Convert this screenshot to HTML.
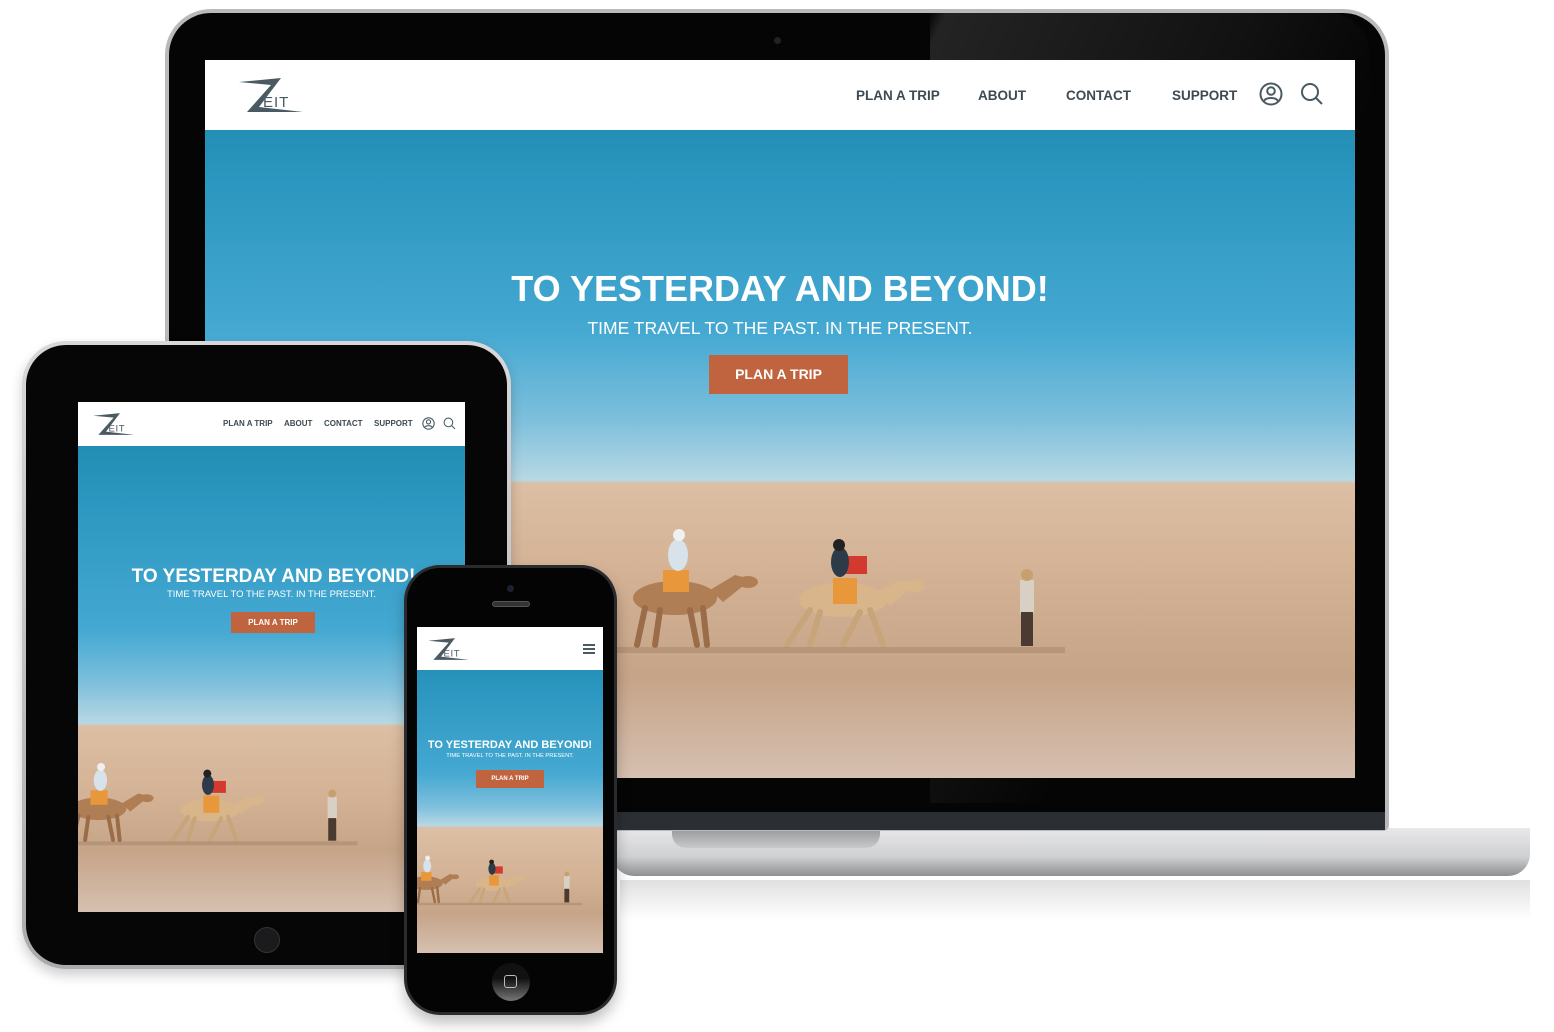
<!DOCTYPE html>
<html><head><meta charset="utf-8"><style>
*{margin:0;padding:0;box-sizing:border-box}
body{width:1554px;height:1032px;background:#fff;position:relative;overflow:hidden;font-family:"Liberation Sans",sans-serif}
.abs{position:absolute}
.scr{position:absolute;overflow:hidden}
.nav{position:absolute;left:0;top:0;width:100%;background:#fff}
.nav span{position:absolute;color:#3d4a52;font-weight:bold;white-space:nowrap}
.h{position:absolute;width:100%;text-align:center;color:#fff;font-weight:bold;white-space:nowrap}
.s{position:absolute;width:100%;text-align:center;color:#fff;white-space:nowrap}
.b{position:absolute;background:#c0643f;color:#fff;font-weight:bold;text-align:center;white-space:nowrap}
</style></head><body>
<svg width="0" height="0" style="position:absolute">
<defs>
<symbol id="logo" viewBox="0 0 66 36"><polygon points="2,5 44,1 22,30 66,35 10,35 34,8" fill="#4a5a63"/><text x="26" y="30" font-family="Liberation Sans" font-size="15" fill="#4a5a63" letter-spacing="1">EIT</text></symbol>
<symbol id="camels" viewBox="0 0 450 140">
<g fill="#b07e55"><ellipse cx="60" cy="78" rx="42" ry="17"/><polygon points="95,70 120,55 132,58 128,66 108,82"/><ellipse cx="133" cy="62" rx="10" ry="6"/></g>
<g stroke="#9a6c48" stroke-width="6" stroke-linecap="round"><line x1="30" y1="88" x2="22" y2="125"/><line x1="45" y1="90" x2="40" y2="125"/><line x1="75" y1="90" x2="82" y2="125"/><line x1="88" y1="88" x2="92" y2="125"/></g>
<rect x="48" y="50" width="26" height="22" fill="#e8973a"/><ellipse cx="63" cy="35" rx="10" ry="16" fill="#d8e2ea"/><circle cx="64" cy="15" r="6" fill="#f0f0f0"/>
<g fill="#d8b58a"><ellipse cx="228" cy="80" rx="44" ry="17"/><polygon points="262,72 285,60 298,62 294,70 275,86"/><ellipse cx="300" cy="66" rx="10" ry="6"/></g>
<g stroke="#c8a47a" stroke-width="6" stroke-linecap="round"><line x1="195" y1="90" x2="172" y2="125"/><line x1="205" y1="92" x2="195" y2="125"/><line x1="245" y1="92" x2="228" y2="125"/><line x1="255" y1="90" x2="268" y2="125"/></g>
<rect x="218" y="58" width="24" height="26" fill="#e8973a"/><rect x="230" y="36" width="22" height="18" fill="#d23a30"/><ellipse cx="225" cy="42" rx="9" ry="15" fill="#2d3b48"/><circle cx="224" cy="25" r="6" fill="#222"/>
<rect x="405" y="60" width="14" height="34" fill="#d8d0c4"/><rect x="406" y="92" width="12" height="34" fill="#4a3a30"/><circle cx="412" cy="55" r="6" fill="#c8a070"/>
<rect x="0" y="127" width="450" height="6" fill="#9a7a60" opacity=".4"/>
</symbol>
</defs></svg>

<!-- LAPTOP -->
<div class="abs" style="left:612px;top:828px;width:918px;height:48px;background:linear-gradient(#e8e8ea,#cfd0d2 60%,#8e8f92);border-radius:0 0 22px 22px"></div>
<div class="abs" style="left:672px;top:830px;width:208px;height:18px;background:linear-gradient(#9a9b9d,#c9cacc);border-radius:0 0 14px 14px"></div>
<div class="abs" style="left:620px;top:880px;width:910px;height:40px;background:linear-gradient(rgba(0,0,0,.12),rgba(0,0,0,0))"></div>
<div class="abs" style="left:165px;top:9px;width:1224px;height:822px;background:#b9babc;border-radius:46px 46px 6px 6px"></div>
<div class="abs" style="left:169px;top:13px;width:1216px;height:800px;background:#050505;border-radius:42px 42px 0 0"></div>
<div class="abs" style="left:169px;top:812px;width:1216px;height:18px;background:#2b2e33"></div>
<div class="abs" style="left:930px;top:13px;width:440px;height:790px;background:linear-gradient(115deg,rgba(255,255,255,0) 0%,rgba(255,255,255,.12) 2%,rgba(255,255,255,.05) 40%,rgba(255,255,255,0) 60%);border-radius:0 42px 0 0"></div>
<div class="abs" style="left:774px;top:37px;width:7px;height:7px;border-radius:50%;background:#222"></div>
<div class="scr" style="left:205px;top:60px;width:1150px;height:718px;background:linear-gradient(#1b85a8 0%,#2c97c0 18%,#45a9d2 38%,#7dbfdc 50%,#b7d8e4 58.5%,#dcbfa4 59%,#d3b194 72%,#c6a488 86%,#d6c0b0 100%)">
 <div class="nav" style="height:70px">
  <svg class="abs" style="left:32px;top:17px" width="66" height="36"><use href="#logo"/></svg>
  <span style="left:651px;top:28px;font-size:13.5px">PLAN A TRIP</span>
  <span style="left:773px;top:28px;font-size:13.5px">ABOUT</span>
  <span style="left:861px;top:28px;font-size:13.5px">CONTACT</span>
  <span style="left:967px;top:28px;font-size:13.5px">SUPPORT</span>
  <svg class="abs" style="left:1054px;top:22px" width="24" height="24" viewBox="0 0 24 24" fill="none" stroke="#4a5a63" stroke-width="2"><circle cx="12" cy="12" r="10.5"/><circle cx="12" cy="9" r="3.8"/><path d="M5 19c2-4 12-4 14 0"/></svg>
  <svg class="abs" style="left:1095px;top:22px" width="24" height="24" viewBox="0 0 24 24" fill="none" stroke="#4a5a63" stroke-width="2"><circle cx="10" cy="10" r="8"/><path d="M16 16l6 6"/></svg>
 </div>
 <div class="h" style="top:208px;font-size:36px">TO YESTERDAY AND BEYOND!</div>
 <div class="s" style="top:258px;font-size:17.5px">TIME TRAVEL TO THE PAST. IN THE PRESENT.</div>
 <div class="b" style="left:504px;top:295px;width:139px;height:39px;line-height:39px;font-size:14px">PLAN A TRIP</div>
 <svg class="abs" style="left:410px;top:460px" width="450" height="140"><use href="#camels"/></svg>
</div>

<!-- TABLET -->
<div class="abs" style="left:22px;top:341px;width:489px;height:628px;background:linear-gradient(#d8d8da,#a9aaad);border-radius:44px;box-shadow:0 6px 12px rgba(0,0,0,.2)"></div>
<div class="abs" style="left:26px;top:345px;width:481px;height:620px;background:#060606;border-radius:40px"></div>
<div class="abs" style="left:254px;top:927px;width:26px;height:26px;border-radius:50%;background:#1b1b1d;border:1px solid #333"></div>
<div class="scr" style="left:78px;top:402px;width:387px;height:510px;background:linear-gradient(#1b85a8 0%,#2c97c0 20%,#45a9d2 45%,#7dbfdc 55%,#b7d8e4 63%,#dcbfa4 63.5%,#d3b194 78%,#c6a488 88%,#d6c0b0 100%)">
 <div class="nav" style="height:44px">
  <svg class="abs" style="left:14px;top:10px" width="42" height="24"><use href="#logo"/></svg>
  <span style="left:145px;top:17px;font-size:8px">PLAN A TRIP</span>
  <span style="left:206px;top:17px;font-size:8px">ABOUT</span>
  <span style="left:246px;top:17px;font-size:8px">CONTACT</span>
  <span style="left:296px;top:17px;font-size:8px">SUPPORT</span>
  <svg class="abs" style="left:344px;top:15px" width="13" height="13" viewBox="0 0 24 24" fill="none" stroke="#4a5a63" stroke-width="2"><circle cx="12" cy="12" r="10.5"/><circle cx="12" cy="9" r="3.8"/><path d="M5 19c2-4 12-4 14 0"/></svg>
  <svg class="abs" style="left:365px;top:15px" width="13" height="13" viewBox="0 0 24 24" fill="none" stroke="#4a5a63" stroke-width="2"><circle cx="10" cy="10" r="8"/><path d="M16 16l6 6"/></svg>
 </div>
 <div class="h" style="top:164px;left:2px;font-size:19px">TO YESTERDAY AND BEYOND!</div>
 <div class="s" style="top:187px;font-size:9.5px">TIME TRAVEL TO THE PAST. IN THE PRESENT.</div>
 <div class="b" style="left:153px;top:210px;width:84px;height:21px;line-height:21px;font-size:8px">PLAN A TRIP</div>
 <svg class="abs" style="left:-20px;top:355px" width="300" height="93"><use href="#camels"/></svg>
</div>

<!-- PHONE -->
<div class="abs" style="left:404px;top:565px;width:213px;height:450px;background:#2a2b2e;border-radius:36px;box-shadow:0 8px 14px rgba(0,0,0,.25)"></div>
<div class="abs" style="left:407px;top:568px;width:207px;height:444px;background:#040404;border-radius:33px"></div>
<div class="abs" style="left:507px;top:585px;width:7px;height:7px;border-radius:50%;background:#1c2233"></div>
<div class="abs" style="left:492px;top:601px;width:38px;height:6px;border-radius:4px;background:#333;border:1px solid #555"></div>
<div class="abs" style="left:492px;top:963px;width:38px;height:38px;border-radius:50%;background:linear-gradient(#111 40%,#777);"></div>
<div class="abs" style="left:504px;top:975px;width:13px;height:13px;border:1.5px solid #bbb;border-radius:3px"></div>
<div class="scr" style="left:417px;top:627px;width:186px;height:326px;background:linear-gradient(#1b85a8 0%,#2c97c0 20%,#45a9d2 45%,#7dbfdc 55%,#b7d8e4 61%,#dcbfa4 61.5%,#d3b194 78%,#c6a488 88%,#d6c0b0 100%)">
 <div class="nav" style="height:43px">
  <svg class="abs" style="left:10px;top:10px" width="42" height="24"><use href="#logo"/></svg>
  <div class="abs" style="left:166px;top:17px;width:12px;height:2px;background:#4a5a63;box-shadow:0 4px 0 #4a5a63,0 8px 0 #4a5a63"></div>
 </div>
 <div class="h" style="top:112px;font-size:11px">TO YESTERDAY AND BEYOND!</div>
 <div class="s" style="top:126px;font-size:5.8px">TIME TRAVEL TO THE PAST. IN THE PRESENT.</div>
 <div class="b" style="left:59px;top:143px;width:68px;height:18px;line-height:18px;font-size:6px">PLAN A TRIP</div>
 <svg class="abs" style="left:-15px;top:225px" width="180" height="56"><use href="#camels"/></svg>
</div>
</body></html>
